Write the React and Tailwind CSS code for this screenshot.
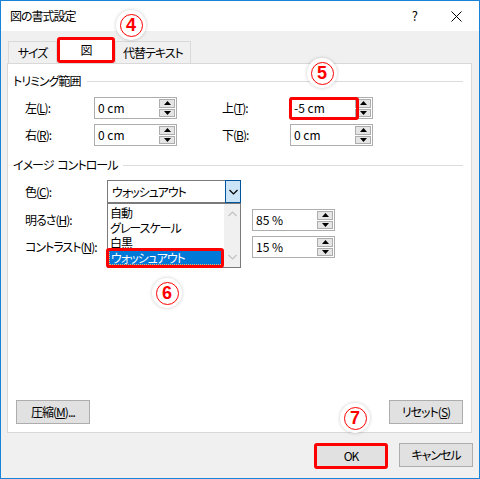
import React from "react";

const jp = "font-['Meiryo_UI','Noto_Sans_CJK_JP',sans-serif] [font-feature-settings:'palt'] tracking-[-1px]";

function Arrow({ up }) {
  return (
    <svg width="7" height="4" viewBox="0 0 7 4">
      {up ? <path d="M0 4 L3.5 0 L7 4 Z" fill="#000" /> : <path d="M0 0 L3.5 4 L7 0 Z" fill="#000" />}
    </svg>
  );
}

function Spin({ value, red }) {
  return (
    <div className="relative flex h-[22px] w-[83px] border border-[#adadad] bg-white">
      <div className="flex-1 flex items-center pl-[3px] text-[12px] tracking-normal">{value}</div>
      <div className="flex flex-col gap-[1px] w-[17px] py-[1px] pr-[1px]">
        <div className="flex-1 flex items-center justify-center border border-[#adadad] bg-[#e5e5e5]">
          <Arrow up />
        </div>
        <div className="flex-1 flex items-center justify-center border border-[#adadad] bg-[#e5e5e5]">
          <Arrow />
        </div>
      </div>
      {red && (
        <div className="absolute left-[-2px] top-[-1px] w-[70px] h-[23px] border-[3px] border-[#ff0000] rounded-[3px]" />
      )}
    </div>
  );
}

function Badge({ n, className }) {
  return (
    <div className={`absolute w-[30px] h-[30px] rounded-full bg-white shadow-[0_0_3px_1px_rgba(0,0,0,0.12)] flex items-center justify-center ${className}`}>
      <div className="w-[23px] h-[23px] rounded-full border-[1.5px] border-[#ff0000] flex items-center justify-center text-[#ff0000] font-bold text-[18px] leading-none tracking-normal font-['Liberation_Sans',Arial,sans-serif]">
        {n}
      </div>
    </div>
  );
}

function SectionHeader({ children }) {
  return (
    <div className="flex items-center h-[16px] pr-[8px]">
      <span className="text-[12px] whitespace-nowrap">{children}</span>
      <div className="flex-1 h-px bg-[#dcdcdc] ml-[6px]" />
    </div>
  );
}

function Btn({ children, red }) {
  return (
    <div
      className={`flex items-center justify-center w-[74px] h-[24px] bg-[#e1e1e1] text-[12px] ${
        red ? "border-[3px] border-[#ff0000] rounded-[3px] h-[26px]" : "border border-[#adadad]"
      }`}
    >
      {children}
    </div>
  );
}

function Chevron({ up, color = "#000" }) {
  return (
    <svg width="9" height="6" viewBox="0 0 9 6">
      <path d={up ? "M0.5 5 L4.5 1 L8.5 5" : "M0.5 1 L4.5 5 L8.5 1"} stroke={color} strokeWidth="1.2" fill="none" />
    </svg>
  );
}

export default function App() {
  return (
    <div className={`relative w-[480px] h-[479px] border border-[#1883d7] bg-[#f0f0f0] flex flex-col overflow-hidden text-black ${jp}`}>
      {/* title bar */}
      <div className="h-[30px] bg-white flex items-center pl-[9px]">
        <span className="text-[12px]">図の書式設定</span>
        <span className="ml-auto text-[13px] mr-[34px]">?</span>
        <svg width="11" height="11" viewBox="0 0 11 11" className="mr-[17px]">
          <path d="M0.5 0.5 L10.5 10.5 M10.5 0.5 L0.5 10.5" stroke="#000" strokeWidth="1" />
        </svg>
      </div>

      {/* tabs */}
      <div className="mt-[6px] ml-[7px] flex items-end h-[26px]">
        <div className="w-[49px] h-[22px] border border-b-0 border-[#d9d9d9] flex items-center justify-center text-[12px]">
          サイズ
        </div>
        <div className="w-[58px] h-[26px] bg-white border-[3px] border-[#ff0000] rounded-[3px] flex items-center justify-center text-[12px] z-10">
          図
        </div>
        <div className="w-[76px] h-[22px] border border-b-0 border-[#d9d9d9] flex items-center justify-center text-[12px]">
          代替テキスト
        </div>
      </div>

      {/* panel */}
      <div className="ml-[6px] w-[465px] h-[370px] bg-white border border-[#d9d9d9] flex flex-col pl-[5px] pt-[9px] pb-[8px]">
        <SectionHeader>トリミング範囲</SectionHeader>

        <div className="mt-[8px] ml-[12px] flex items-center h-[22px] text-[12px]">
          <span className="w-[69px]">左(<u>L</u>):</span>
          <Spin value="0 cm" />
          <span className="ml-[45px] w-[68px]">上(<u>T</u>):</span>
          <Spin value="-5 cm" red />
        </div>
        <div className="mt-[5px] ml-[12px] flex items-center h-[22px] text-[12px]">
          <span className="w-[69px]">右(<u>R</u>):</span>
          <Spin value="0 cm" />
          <span className="ml-[45px] w-[68px]">下(<u>B</u>):</span>
          <Spin value="0 cm" />
        </div>

        <div className="mt-[11px]">
          <SectionHeader>
            イメージ<span className="ml-[4px]">コントロール</span>
          </SectionHeader>
        </div>

        <div className="mt-[7px] ml-[12px] flex items-center h-[23px] text-[12px]">
          <span className="w-[82px]">色(<u>C</u>):</span>
          <div className="relative w-[134px] h-[23px] border border-[#7a7a7a] bg-white flex z-10">
            <div className="flex-1 flex items-center pl-[4px]">ウォッシュアウト</div>
            <div className="w-[16px] -my-px -mr-px bg-[#cce4f7] border border-[#005499] flex items-center justify-center">
              <Chevron />
            </div>
            {/* dropdown list */}
            <div className="absolute left-[-1px] top-[22px] w-[134px] h-[65px] border border-[#7a7a7a] bg-white flex leading-[15px]">
              <div className="relative flex-1 flex flex-col pt-[1px]">
                <div className="h-[15px] flex items-center pl-[2px]">自動</div>
                <div className="h-[15px] flex items-center pl-[2px]">グレースケール</div>
                <div className="h-[15px] flex items-center pl-[2px]">白黒</div>
                <div className="h-[15px] mx-[1px] flex items-center pl-[1px] leading-[13px] bg-[#0078d7] text-white border border-dotted border-[#e8b868]">
                  ウォッシュアウト
                </div>
                <div className="absolute left-[-2px] top-[44px] w-[118px] h-[20px] border-[3px] border-[#ff0000] rounded-[3px]" />
              </div>
              <div className="w-[16px] bg-[#f0f0f0] flex flex-col items-center justify-between py-[7px]">
                <Chevron up color="#c2c2c2" />
                <Chevron color="#c2c2c2" />
              </div>
            </div>
          </div>
        </div>
        <div className="mt-[6px] ml-[12px] w-[310px] flex items-center justify-between h-[22px] text-[12px]">
          <span>明るさ(<u>H</u>):</span>
          <Spin value="85 %" />
        </div>
        <div className="mt-[5px] ml-[12px] w-[310px] flex items-center justify-between h-[22px] text-[12px]">
          <span>コントラスト(<u>N</u>):</span>
          <Spin value="15 %" />
        </div>

        <div className="flex-1" />

        <div className="flex justify-between pl-[3px] pr-[8px]">
          <Btn>
            圧縮(<u>M</u>)...
          </Btn>
          <Btn>
            リセット(<u>S</u>)
          </Btn>
        </div>
      </div>

      {/* bottom buttons */}
      <div className="mt-[10px] flex justify-end items-start gap-[11px] mr-[6px]">
        <Btn red>OK</Btn>
        <Btn>キャンセル</Btn>
      </div>

      <Badge n="4" className="left-[115px] top-[9px] z-20" />
      <Badge n="5" className="left-[306px] top-[57px] z-20" />
      <Badge n="6" className="left-[151px] top-[277px] z-20" />
      <Badge n="7" className="left-[339px] top-[402px] z-20" />
    </div>
  );
}
